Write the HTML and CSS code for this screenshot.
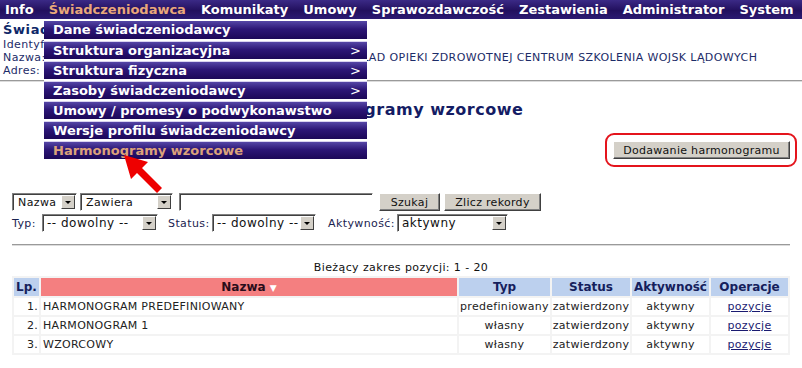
FILE: index.html
```html
<!DOCTYPE html>
<html lang="pl">

<head>
    <meta charset="UTF-8">
    <title>Harmonogramy wzorcowe</title>
    <link rel="stylesheet" href="styles.css">
</head>

<body>
    <!-- Main menu -->
    <div class="menubar">
        <a class="menu-item">Info</a>
        <a class="menu-item active">Świadczeniodawca</a>
        <a class="menu-item">Komunikaty</a>
        <a class="menu-item">Umowy</a>
        <a class="menu-item">Sprawozdawczość</a>
        <a class="menu-item">Zestawienia</a>
        <a class="menu-item">Administrator</a>
        <a class="menu-item">System</a>
    </div>

    <!-- Opened submenu -->
    <ul class="submenu">
        <li>Dane świadczeniodawcy</li>
        <li class="has-sub">Struktura organizacyjna</li>
        <li class="has-sub">Struktura fizyczna</li>
        <li class="has-sub">Zasoby świadczeniodawcy</li>
        <li>Umowy / promesy o podwykonawstwo</li>
        <li>Wersje profilu świadczeniodawcy</li>
        <li class="current">Harmonogramy wzorcowe</li>
    </ul>

    <div class="provider">
        <div class="provider-title">Świadczeniodawca</div>
        <div class="provider-line">Identyfikator: 000000012345</div>
        <div class="provider-line">Nazwa: 1 SZPITAL WOJSKOWY SAMODZIELNY PUBLICZNY ZAKŁAD OPIEKI ZDROWOTNEJ CENTRUM SZKOLENIA WOJSK LĄDOWYCH</div>
        <div class="provider-line">Adres: ul. Szkolna 1, 00-000 Miasto</div>
    </div>
    <div class="rule"></div>

    <h1 class="page-title">Harmonogramy wzorcowe</h1>

    <div class="actions">
        <div class="highlight">
            <button class="btn btn-add">Dodawanie harmonogramu</button>
        </div>
    </div>

    <!-- Search form -->
    <div class="filters">
        <div class="filter-row row-search">
            <span class="select w-name"><span class="select-text">Nazwa</span><span class="select-arrow"></span></span>
            <span class="select w-op"><span class="select-text">Zawiera</span><span class="select-arrow"></span></span>
            <span class="textbox"></span>
            <button class="btn w-search">Szukaj</button>
            <button class="btn w-count">Zlicz rekordy</button>
        </div>
        <div class="filter-row">
            <span class="label l-type">Typ:</span>
            <span class="select w-type"><span class="select-text">-- dowolny --</span><span class="select-arrow"></span></span>
            <span class="label l-status">Status:</span>
            <span class="select w-status"><span class="select-text">-- dowolny --</span><span class="select-arrow"></span></span>
            <span class="label l-active">Aktywność:</span>
            <span class="select w-active"><span class="select-text">aktywny</span><span class="select-arrow"></span></span>
        </div>
    </div>
    <div class="rule rule-inner"></div>

    <div class="range">Bieżący zakres pozycji: 1 - 20</div>

    <table class="grid">
        <thead>
            <tr>
                <th class="col-lp">Lp.</th>
                <th class="col-name sorted">Nazwa <span class="sort-mark">&#9660;</span></th>
                <th class="col-type">Typ</th>
                <th class="col-status">Status</th>
                <th class="col-active">Aktywność</th>
                <th class="col-ops">Operacje</th>
            </tr>
        </thead>
        <tbody>
            <tr>
                <td class="num">1.</td>
                <td>HARMONOGRAM PREDEFINIOWANY</td>
                <td class="center">predefiniowany</td>
                <td class="center">zatwierdzony</td>
                <td class="center">aktywny</td>
                <td class="center"><a class="link">pozycje</a></td>
            </tr>
            <tr>
                <td class="num">2.</td>
                <td>HARMONOGRAM 1</td>
                <td class="center">własny</td>
                <td class="center">zatwierdzony</td>
                <td class="center">aktywny</td>
                <td class="center"><a class="link">pozycje</a></td>
            </tr>
            <tr>
                <td class="num">3.</td>
                <td>WZORCOWY</td>
                <td class="center">własny</td>
                <td class="center">zatwierdzony</td>
                <td class="center">aktywny</td>
                <td class="center"><a class="link">pozycje</a></td>
            </tr>
        </tbody>
    </table>

    <!-- Red pointer arrow -->
    <svg class="pointer" width="802" height="368" viewBox="0 0 802 368">
        <polygon fill="#ee0000"
            points="124,155 148,162 142,168 162,188 157,193 137,173 131,179" />
    </svg>
</body>

</html>
```

FILE: styles.css
```css
body {
    margin: 0;
    padding: 0;
    font-family: "DejaVu Sans", Verdana, sans-serif;
    font-size: 11px;
    color: #1a2350;
    background: #fff;
    position: relative;
    width: 802px;
    height: 368px;
    overflow: hidden;
}

/* Top menu bar */
.menubar {
    display: flex;
    height: 19px;
    align-items: center;
    padding-left: 5px;
    background: linear-gradient(#3b2a86, #22105e 55%, #2b1a72);
}

.menu-item {
    color: #fff;
    font-weight: bold;
    font-size: 13px;
    margin-right: 15px;
    white-space: nowrap;
}

.menu-item.active {
    color: #e9a77a;
}

/* Dropdown of the active menu item */
.submenu {
    position: absolute;
    top: 21px;
    left: 44px;
    width: 323px;
    margin: 0;
    padding: 0;
    list-style: none;
    background: #fff;
    z-index: 5;
}

.submenu li {
    position: relative;
    height: 18px;
    line-height: 18px;
    padding-left: 9px;
    margin-bottom: 2px;
    color: #fff;
    font-weight: bold;
    font-size: 13px;
    white-space: nowrap;
    background: linear-gradient(#5546a6, #2c1676 45%, #1c0858);
    border-top: 1px solid #d8d2f0;
    box-sizing: border-box;
}

.submenu li:first-child {
    border-top: 0;
}

.submenu li.has-sub::after {
    content: '>';
    position: absolute;
    right: 6px;
    top: 0;
    font-weight: normal;
}

.submenu li.current {
    color: #dca27a;
}

/* Provider details */
.provider {
    padding: 2px 3px 0;
    color: #1c2c68;
}

.provider-title {
    font-size: 13px;
    font-weight: bold;
    line-height: 17px;
    letter-spacing: 0.6px;
    color: #0e2868;
}

.provider-line {
    line-height: 13px;
    letter-spacing: 0.4px;
    white-space: nowrap;
}

.rule {
    margin-top: 3px;
    height: 1px;
    background: #9a9a9a;
    border-bottom: 1px solid #dcdcdc;
}

.rule-inner {
    margin: 12px 12px 0;
}

.page-title {
    margin: 18px 0 0;
    text-align: center;
    font-size: 16px;
    line-height: 20px;
    letter-spacing: 0.5px;
    color: #141c64;
}

.actions {
    display: flex;
    justify-content: flex-end;
    margin-top: 13px;
    padding-right: 5px;
}

.highlight {
    border: 2px solid #e4141c;
    border-radius: 9px;
    padding: 6px 5px 6px 6px;
}

/* Classic grey buttons */
.btn {
    font-family: "DejaVu Sans", Verdana, sans-serif;
    font-size: 11px;
    letter-spacing: 0.3px;
    color: #111;
    background: #d4d0c8;
    border: 1px solid;
    border-color: #fff #404040 #404040 #fff;
    box-shadow: inset -1px -1px 0 #808080;
    height: 18px;
    padding: 0;
}

.btn-add { width: 177px; }
.w-search { width: 61px; margin-left: 6px; }
.w-count { width: 97px; margin-left: 4px; }

/* Search filters */
.filters {
    margin-top: 26px;
    padding-left: 12px;
}

.filter-row {
    display: flex;
    align-items: center;
    height: 18px;
    margin-bottom: 3px;
}

.label {
    letter-spacing: 0.4px;
}

.l-type { width: 30px; }
.l-status { width: 44px; margin-left: 7px; }
.l-active { width: 69px; margin-left: 9px; }

.select {
    display: flex;
    align-items: center;
    height: 18px;
    box-sizing: border-box;
    border: 1px solid;
    border-color: #808080 #fff #fff #808080;
    box-shadow: inset 1px 1px 0 #404040;
    background: #fff;
    margin-right: 3px;
}

.select-text {
    flex: 1;
    padding-left: 4px;
    font-size: 12px;
    letter-spacing: 0.5px;
    white-space: nowrap;
    overflow: hidden;
    color: #111;
}

.row-search .select-text {
    padding-left: 5px;
    font-size: 11px;
    letter-spacing: 0.4px;
}

.select-arrow {
    position: relative;
    width: 14px;
    height: 14px;
    margin-right: 1px;
    box-sizing: border-box;
    background: #d4d0c8;
    border: 1px solid;
    border-color: #fff #404040 #404040 #fff;
}

.select-arrow::after {
    content: '';
    position: absolute;
    left: 3px;
    top: 5px;
    border-left: 3px solid transparent;
    border-right: 3px solid transparent;
    border-top: 3px solid #000;
}

.w-name { width: 65px; }
.w-op { width: 93px; margin-right: 6px; }
.w-type { width: 116px; }
.w-status { width: 104px; }
.w-active { width: 111px; }

.textbox {
    width: 194px;
    height: 18px;
    box-sizing: border-box;
    border: 1px solid;
    border-color: #808080 #fff #fff #808080;
    box-shadow: inset 1px 1px 0 #404040;
    background: #fff;
}

.range {
    margin-top: 15px;
    text-align: center;
    letter-spacing: 0.4px;
    color: #111;
    line-height: 13px;
}

/* Result table */
.grid {
    margin: 2px 0 0 12px;
    width: 778px;
    border-spacing: 2px;
    background: #f3f3f3;
    font-size: 11px;
}

.grid th {
    height: 18px;
    padding: 0;
    font-size: 12px;
    color: #15205c;
    background: #bcd0ee;
}

.grid th.sorted {
    background: #f47f80;
    color: #2a0d1a;
}

.sort-mark {
    color: #fff;
    font-size: 9px;
}

.col-lp { width: 25px; }
.col-type { width: 91px; }
.col-status { width: 78px; }
.col-active { width: 77px; }
.col-ops { width: 77px; }

.grid td {
    height: 17px;
    padding: 0 2px;
    background: #fff;
    color: #222;
    letter-spacing: 0.3px;
    white-space: nowrap;
}

.grid td.num {
    text-align: right;
    padding-right: 1px;
}

.grid td.center {
    text-align: center;
    padding: 0;
}

.link {
    color: #1a1a70;
    text-decoration: underline;
}

.pointer {
    position: absolute;
    top: 0;
    left: 0;
    pointer-events: none;
    z-index: 6;
}
```
